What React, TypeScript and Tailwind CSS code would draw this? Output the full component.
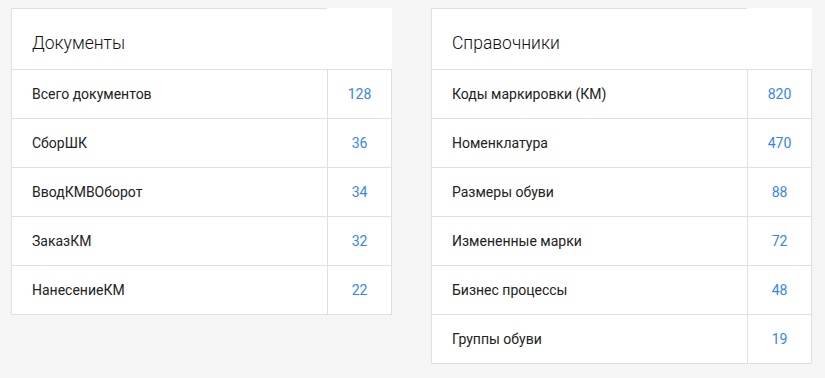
import React from "react";

type Row = { label: string; value: number };

const documents: Row[] = [
  { label: "Всего документов", value: 128 },
  { label: "СборШК", value: 36 },
  { label: "ВводКМВОборот", value: 34 },
  { label: "ЗаказКМ", value: 32 },
  { label: "НанесениеКМ", value: 22 },
];

const references: Row[] = [
  { label: "Коды маркировки (КМ)", value: 820 },
  { label: "Номенклатура", value: 470 },
  { label: "Размеры обуви", value: 88 },
  { label: "Измененные марки", value: 72 },
  { label: "Бизнес процессы", value: 48 },
  { label: "Группы обуви", value: 19 },
];

function StatCard({ title, rows }: { title: string; rows: Row[] }) {
  return (
    <div className="w-[381px] bg-white">
      <div className="flex h-[61px]">
        <div className="w-[316px] border-l border-t border-[#e0e0e0] pl-[20px] pt-[21px] text-[17.5px] font-light leading-[26px] text-[#111]">
          {title}
        </div>
        <div className="flex-1" />
      </div>
      <div className="border-b border-[#e0e0e0]">
        {rows.map((row) => (
          <div key={row.label} className="flex h-[49px] border-l border-r border-t border-[#e0e0e0]">
            <div className="flex w-[316px] items-center border-r border-[#e0e0e0] pl-[20px] pt-[1px] text-[14px] text-[#222]">
              {row.label}
            </div>
            <div className="flex flex-1 items-center justify-center pt-[1px] text-[14px] text-[#3585f5]">{row.value}</div>
          </div>
        ))}
      </div>
    </div>
  );
}

export default function App() {
  return (
    <div className="flex min-h-[378px] items-start gap-[39px] bg-[#f5f5f5] pl-[11px] pt-[8px]" style={{ fontFamily: "Roboto, 'Noto Sans', sans-serif" }}>
      <StatCard title="Документы" rows={documents} />
      <StatCard title="Справочники" rows={references} />
    </div>
  );
}
